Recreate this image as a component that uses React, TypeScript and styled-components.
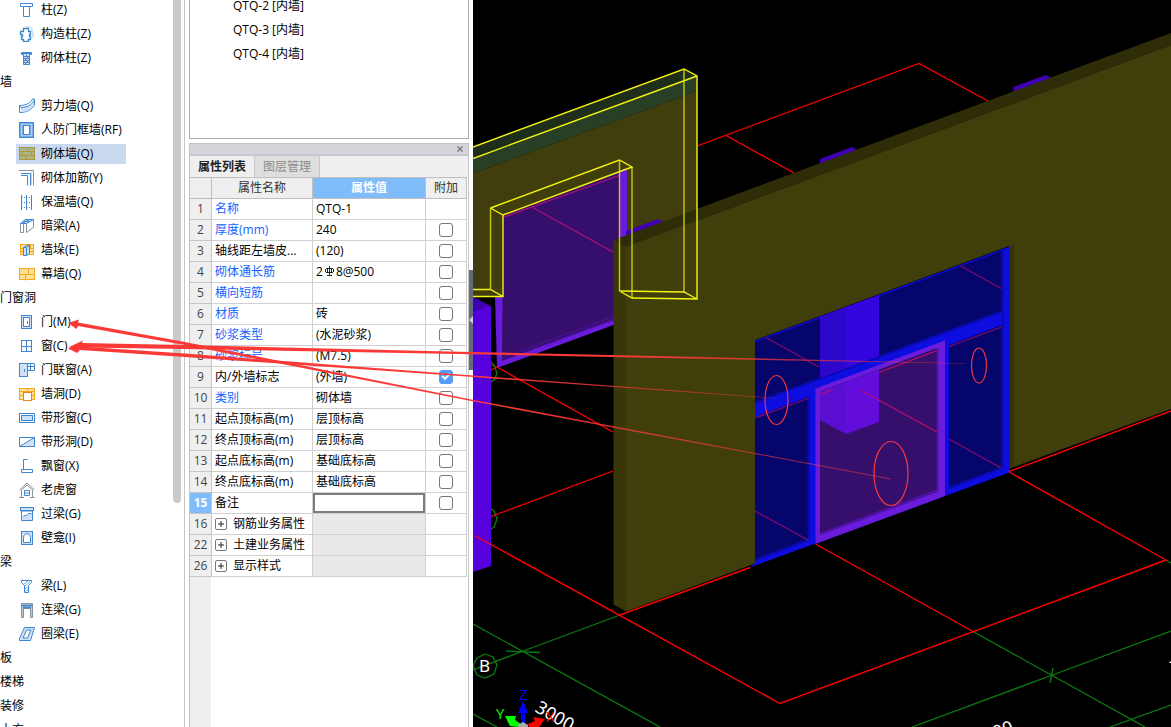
import React from "react";
import styled, { createGlobalStyle } from "styled-components";

const GlobalStyle = createGlobalStyle`
  *, *::before, *::after { box-sizing: border-box; }
  body {
    margin: 0;
    background: #fff;
    overflow: hidden;
    font: 12px/20px "Open Sans", "Noto Sans CJK SC", sans-serif;
    color: #000;
  }
  button, input, table { font: inherit; color: inherit; }
  ul { list-style: none; margin: 0; padding: 0; }
`;

const Shell = styled.div`
  position: relative;
  display: flex;
  height: 100vh;
  overflow: hidden;
`;

const Sidebar = styled.nav`
  flex: 0 0 185px;
  display: flex;
  justify-content: space-between;
  padding-right: 3px;
  border-right: 1px solid #c4c6c8;
  overflow: hidden;
`;

const Tree = styled.ul`
  margin-top: -2px;
`;

const TreeGroup = styled.li`
  height: 24px;
  line-height: 24px;
  white-space: nowrap;
`;

const TreeRow = styled.li`
  height: 24px;
  display: flex;
  align-items: center;
  padding-left: 16px;
`;

const TreeButton = styled.button<{ $selected: boolean }>`
  display: flex;
  align-items: center;
  gap: 6px;
  width: 110px;
  height: 20px;
  padding: 0 3px;
  border: 0;
  background: ${(p) => (p.$selected ? "#c9d9f0" : "transparent")};
  white-space: nowrap;
  svg { flex: none; }
`;

const ScrollThumb = styled.div`
  width: 8px;
  height: 503px;
  border-radius: 0 0 4px 4px;
  background: #cacaca;
`;

const Middle = styled.div`
  position: relative;
  flex: 0 0 288px;
  display: flex;
  flex-direction: column;
  gap: 4px;
  padding: 0 4px;
`;

const ComponentList = styled.ul`
  flex: 0 0 139px;
  overflow: hidden;
  border: 1px solid #acacac;
  border-top: 0;
  li {
    height: 24px;
    padding-left: 43px;
    line-height: 24px;
  }
  li:first-child { margin-top: -6px; }
`;

const Dock = styled.section`
  flex: 1;
  display: flex;
  flex-direction: column;
  min-height: 0;
  border: 1px solid #c2c4c8;
  border-bottom: 0;
`;

const DockTitle = styled.header`
  display: flex;
  justify-content: flex-end;
  align-items: center;
  height: 12px;
  padding-right: 4px;
  background: #d3d5da;
  border-bottom: 2px solid #c5c8cc;
`;

const CloseButton = styled.button`
  display: flex;
  padding: 0;
  border: 0;
  background: none;
`;

const Tabs = styled.div`
  display: flex;
  height: 21px;
  background: #efefef;
`;

const Tab = styled.button<{ $active: boolean }>`
  width: 65px;
  padding: 0;
  border: 0;
  border-right: 1px solid #c5c8cc;
  background: ${(p) => (p.$active ? "#efefef" : "#dedede")};
  color: ${(p) => (p.$active ? "#222" : "#8c8c8c")};
  font-weight: ${(p) => (p.$active ? 700 : 400)};
`;

const GridArea = styled.div`
  flex: 1;
  padding-right: 1px;
  background: linear-gradient(to right, #efefef 21px, #fff 21px);
`;

const Grid = styled.table`
  width: 100%;
  table-layout: fixed;
  border-collapse: separate;
  border-spacing: 0;
  tr { height: 21px; }
`;

const HeadCell = styled.th<{ $active?: boolean }>`
  height: 22px;
  padding: 0;
  border: solid #bfbfbf;
  border-width: 1px 1px 1px 0;
  background: ${(p) => (p.$active ? "#80bbfa" : "#efefef")};
  color: ${(p) => (p.$active ? "#fff" : "#333")};
  font-weight: ${(p) => (p.$active ? 700 : 400)};
`;

const RowHead = styled.th<{ $active?: boolean }>`
  padding: 0;
  border: solid #c6c6c6;
  border-width: 0 1px 1px 0;
  background: ${(p) => (p.$active ? "#80bbfa" : "#efefef")};
  color: ${(p) => (p.$active ? "#fff" : "#444")};
  font-weight: ${(p) => (p.$active ? 700 : 400)};
`;

const Cell = styled.td<{ $link?: boolean; $muted?: boolean; $center?: boolean }>`
  height: 21px;
  padding: 0 0 0 ${(p) => (p.$center ? 0 : 3)}px;
  border: solid #d0d0d0;
  border-width: 0 1px 1px 0;
  background: ${(p) => (p.$muted ? "#e9e9e9" : "#fff")};
  color: ${(p) => (p.$link ? "#1463ff" : "#000")};
  text-align: ${(p) => (p.$center ? "center" : "left")};
  white-space: nowrap;
  overflow: hidden;
`;

const EditCell = styled(Cell)`
  padding: 0;
`;

const NoteInput = styled.input`
  display: block;
  width: 100%;
  height: 20px;
  padding: 0 2px;
  border: 2px solid #7c7c7c;
  border-radius: 0;
  background: #fff;
  outline: 0;
`;

const Tick = styled.input`
  appearance: none;
  position: relative;
  display: block;
  width: 14px;
  height: 14px;
  margin: 0 auto;
  border: 1px solid #777;
  border-radius: 3px;
  background: #fff;
  &:checked { background: #549ef7; border-color: #549ef7; }
  &:checked::after {
    content: "";
    position: absolute;
    left: 2px;
    top: 2px;
    width: 8px;
    height: 5px;
    border: solid #fff;
    border-width: 0 0 2px 2px;
    transform: rotate(-45deg);
  }
`;

const ExpandLine = styled.div`
  display: flex;
  align-items: center;
  gap: 6px;
`;

const Expand = styled.button`
  display: flex;
  align-items: center;
  justify-content: center;
  width: 12px;
  height: 12px;
  padding: 0;
  border: 1px solid #777;
  border-radius: 2px;
  background: #fff;
`;

const SplitHandle = styled.button`
  position: absolute;
  right: 0;
  top: 270px;
  display: flex;
  align-items: center;
  width: 4px;
  height: 100px;
  padding: 0;
  border: 0;
  background: #626c79;
`;

const Viewport = styled.main`
  flex: 1;
  min-width: 0;
  background: #000;
  svg { display: block; width: 100%; height: 100%; }
`;

const Markup = styled.svg`
  position: absolute;
  inset: 0;
  width: 100%;
  height: 100%;
  pointer-events: none;
`;

const BarMark = styled.svg`
  margin: 0 2px;
`;

const B = "#3f86d0";
const L = "#cfe1f7";
const O = "#f5a81c";
const Y = "#ffe09a";
const G = "#86929c";

const icons: Record<string, React.ReactNode> = {
  column: <path d="M1.500 1.500h12v3h-3v10h-6v-10h-3z M4.500 4.500h6" fill="#fff" stroke={B} />,
  structColumn: (
    <>
      <path d="M7 .8h4l2 2v3l1 1v4l-1 1" fill="none" stroke="#a9c9ec" />
      <path d="M4.500 2.500h5v3h2v3h-1v2h1v3h-2v2h-5v-2h-2v-3h1v-2h-2v-3h3z" fill="#fff" stroke={B} strokeWidth="1.300" />
    </>
  ),
  brickColumn: (
    <>
      <path d="M2.500 2.500h10v2h-2v10h-6v-10h-2z" fill={L} stroke={B} />
      <path d="M5 6.500h5M5 8.500h5M5 10.500h5M5 12.500h5M2 3.500h11M7.500 4.500v2M8.500 6.500v2M6.500 8.500v2M8.500 10.500v2M6.500 12.500v2" stroke={B} />
    </>
  ),
  shear: (
    <>
      <path d="M.5 7.500c6 0 11-2 13-6.500h2v6c-3 5-8 7.500-15 7.500z" fill="#fff" stroke={B} />
      <path d="M2 9.500c6 0 10-2 13-7v4.500c-3 4-7 7-13 7z" fill={L} />
      <path d="M.5 7.500l1.500 2c6 0 10-2 13-7" fill="none" stroke={B} />
    </>
  ),
  airDefense: (
    <>
      <rect x=".5" y=".5" width="14" height="15" fill="#78aeea" stroke={B} />
      <rect x="2.500" y="2.500" width="10" height="11" fill="none" stroke="#a9cdf3" />
      <rect x="4.500" y="3.500" width="6" height="9" fill="#fff" stroke={B} />
    </>
  ),
  brickWall: (
    <>
      <rect x=".5" y="1.500" width="15" height="12" fill="#a9b491" stroke="#ad9a33" />
      <path d="M0 5.500h16M0 9.500h16M8.500 1.500v4M3.500 5.500v4M12.500 5.500v4M7.500 9.500v4" stroke="#ad9a33" />
    </>
  ),
  rebar: (
    <>
      <path d="M0 .5h14.500v15" fill="none" stroke={G} />
      <path d="M2 3.500h9.500v12M2 5.500h6.500v10" fill="none" stroke={B} />
      <path d="M12.500 2v13" stroke="#c3d8f0" />
    </>
  ),
  insulation: (
    <>
      <path d="M2.500 1v15M7.500 1v15M12.500 1v15" stroke={B} />
      <path d="M2.500 3.500h10M2.500 8.500h10M2.500 13.500h10" stroke={B} strokeDasharray="1 1.500" />
    </>
  ),
  hiddenBeam: (
    <>
      <path d="M1.500 5.500l5-4h8v8l-7 5v-9z" fill="#fff" stroke={G} />
      <path d="M1.500 5.500h3v9h-3zM4.500 5.500h3" fill="#fff" stroke={G} />
      <path d="M1.500 5.500l5-4h8l-7 4z" fill={L} stroke={B} />
      <path d="M4 5l6-3.500M5 3.500h6" fill="none" stroke={B} />
    </>
  ),
  pier: (
    <>
      <rect x="1.500" y="2.500" width="13" height="10" fill={Y} stroke={O} />
      <path d="M1 6.500h14M1 9.500h14M11.500 2.500v4" stroke={O} />
      <path d="M4.500 5.500l3-2h3v8l-3 2h-3z" fill={L} stroke={B} />
      <path d="M4.500 5.500h3v8M7.500 5.500l3-2" fill="none" stroke={B} />
    </>
  ),
  curtain: (
    <>
      <rect x=".5" y="2.500" width="15" height="11" fill={Y} stroke={O} />
      <path d="M0 8.500h16M9.500 2.500v6M6.500 8.500v6" stroke={O} />
    </>
  ),
  door: (
    <>
      <rect x="2.500" y="1.500" width="10" height="13" fill={L} stroke={B} />
      <rect x="4.500" y="3.500" width="6" height="9" fill="#fff" stroke={B} />
      <path d="M8.500 7v3" stroke={B} />
    </>
  ),
  window: (
    <>
      <rect x="2.500" y="2.500" width="10" height="11" fill="#fff" stroke={B} />
      <path d="M7.500 2.500v11M2.500 8.500h10" stroke={B} />
      <path d="M5.500 7.500v2M9.500 7.500v2" stroke="#7fb0e6" />
    </>
  ),
  doorWindow: (
    <>
      <path d="M7.500 1.500h8v7h-8zM11.500 1.500v7M7.500 4.500h8" fill="#fff" stroke={B} />
      <rect x=".5" y="1.500" width="8" height="13" fill={L} stroke={B} />
      <path d="M5.500 7v3" stroke={B} />
    </>
  ),
  wallHole: (
    <>
      <rect x=".5" y="2.500" width="15" height="11" fill={Y} stroke={O} />
      <path d="M0 5.500h16M0 9.500h4M12 9.500h4M8.500 2.500v3" stroke={O} />
      <rect x="4.500" y="6.500" width="8" height="8" fill="#fff" stroke="#e98420" />
    </>
  ),
  stripWindow: (
    <>
      <rect x=".5" y="3.500" width="15" height="9" fill="#fff" stroke={B} />
      <rect x="2.500" y="5.500" width="11" height="5" fill={L} stroke={B} />
    </>
  ),
  stripHole: (
    <>
      <rect x=".5" y="3.500" width="15" height="9" fill="#fff" stroke={B} />
      <path d="M.5 12.500l15-9v9z" fill={L} stroke={B} />
    </>
  ),
  bay: <path d="M8.500 1.500h-4v10M2.500 11.500h11v3h-11z" fill="none" stroke={B} />,
  dormer: (
    <>
      <path d="M.5 8l7.500-7 7.500 7M2.500 7.500v7.500M13.500 7.500v7.500M0 15.500h5M11 15.500h5M2.500 8l5.500-5 5.500 5" fill="none" stroke={G} />
      <path d="M5.500 8.500h5v5h-5zM5.500 11h5" fill="#fff" stroke={B} />
    </>
  ),
  lintel: (
    <>
      <path d="M2.500 5h11v9.500h-11z" fill="#fff" stroke={B} />
      <path d="M3 14v-4l4-1 3-2h3v7z" fill={L} />
      <path d="M4.500 10l3-.5 2-2h3" fill="none" stroke={B} />
      <rect x="1.500" y="1.500" width="13" height="3" fill={L} stroke={B} />
    </>
  ),
  niche: (
    <>
      <rect x="2.500" y="1.500" width="11" height="13" fill={L} stroke={B} />
      <path d="M4.500 12.500v-5c0-5 7-5 7 0v5z" fill="#fff" stroke={B} />
    </>
  ),
  beam: (
    <>
      <path d="M2.500 2.500h10v2l-3 3v7h-4v-7l-3-3z" fill="#fff" stroke={B} />
      <path d="M5 6l4-3M6 8l5-4M6 11l3-2M6 13.500l3-2" stroke={B} strokeWidth=".7" />
    </>
  ),
  linkBeam: (
    <>
      <path d="M2.500 1.500h11v14h-2v-9h-7v9h-2z" fill="#bdc7cd" stroke={G} />
      <path d="M3 3.500h10M4 5.500h8" stroke={B} strokeWidth="1.500" />
    </>
  ),
  ringBeam: (
    <>
      <path d="M5.500 1.500h10l-4 13h-11v-2z" fill={L} stroke={B} />
      <path d="M7.500 4h4.500l-3.500 8h-4.500z" fill="#fff" stroke={B} />
    </>
  ),
};

type TreeEntry = { group: string } | { label: string; icon: string; selected?: boolean };

const tree: TreeEntry[] = [
  { label: "柱(Z)", icon: "column" },
  { label: "构造柱(Z)", icon: "structColumn" },
  { label: "砌体柱(Z)", icon: "brickColumn" },
  { group: "墙" },
  { label: "剪力墙(Q)", icon: "shear" },
  { label: "人防门框墙(RF)", icon: "airDefense" },
  { label: "砌体墙(Q)", icon: "brickWall", selected: true },
  { label: "砌体加筋(Y)", icon: "rebar" },
  { label: "保温墙(Q)", icon: "insulation" },
  { label: "暗梁(A)", icon: "hiddenBeam" },
  { label: "墙垛(E)", icon: "pier" },
  { label: "幕墙(Q)", icon: "curtain" },
  { group: "门窗洞" },
  { label: "门(M)", icon: "door" },
  { label: "窗(C)", icon: "window" },
  { label: "门联窗(A)", icon: "doorWindow" },
  { label: "墙洞(D)", icon: "wallHole" },
  { label: "带形窗(C)", icon: "stripWindow" },
  { label: "带形洞(D)", icon: "stripHole" },
  { label: "飘窗(X)", icon: "bay" },
  { label: "老虎窗", icon: "dormer" },
  { label: "过梁(G)", icon: "lintel" },
  { label: "壁龛(I)", icon: "niche" },
  { group: "梁" },
  { label: "梁(L)", icon: "beam" },
  { label: "连梁(G)", icon: "linkBeam" },
  { label: "圈梁(E)", icon: "ringBeam" },
  { group: "板" },
  { group: "楼梯" },
  { group: "装修" },
  { group: "土方" },
];

const RebarMark = () => (
  <BarMark width="9" height="10" viewBox="0 0 9 10" role="img" aria-label="HRB400">
    <path d="M4.500 0v9M2.500 2v5M6.500 2v5M1 2.500h7M1 6.500h7M.5 3v3M8.500 3v3M2 9.500h5" fill="none" stroke="#111" strokeWidth=".9" />
  </BarMark>
);

type Property = { no: number; name: string; link?: boolean; value?: React.ReactNode; tick?: boolean };

const properties: Property[] = [
  { no: 1, name: "名称", link: true, value: "QTQ-1" },
  { no: 2, name: "厚度(mm)", link: true, value: "240", tick: false },
  { no: 3, name: "轴线距左墙皮...", value: "(120)", tick: false },
  { no: 4, name: "砌体通长筋", link: true, value: <>2<RebarMark />8@500</>, tick: false },
  { no: 5, name: "横向短筋", link: true, tick: false },
  { no: 6, name: "材质", link: true, value: "砖", tick: false },
  { no: 7, name: "砂浆类型", link: true, value: "(水泥砂浆)", tick: false },
  { no: 8, name: "砂浆标号", link: true, value: "(M7.5)", tick: false },
  { no: 9, name: "内/外墙标志", value: "(外墙)", tick: true },
  { no: 10, name: "类别", link: true, value: "砌体墙", tick: false },
  { no: 11, name: "起点顶标高(m)", value: "层顶标高", tick: false },
  { no: 12, name: "终点顶标高(m)", value: "层顶标高", tick: false },
  { no: 13, name: "起点底标高(m)", value: "基础底标高", tick: false },
  { no: 14, name: "终点底标高(m)", value: "基础底标高", tick: false },
];

const sections = [
  { no: 16, name: "钢筋业务属性" },
  { no: 22, name: "土建业务属性" },
  { no: 26, name: "显示样式" },
];

function PropertyTable() {
  return (
    <Grid>
      <colgroup>
        <col style={{ width: 22 }} />
        <col style={{ width: 101 }} />
        <col style={{ width: 113 }} />
        <col />
      </colgroup>
      <thead>
        <tr>
          <HeadCell />
          <HeadCell scope="col">属性名称</HeadCell>
          <HeadCell scope="col" $active>属性值</HeadCell>
          <HeadCell scope="col">附加</HeadCell>
        </tr>
      </thead>
      <tbody>
        {properties.map((p) => (
          <tr key={p.no}>
            <RowHead scope="row">{p.no}</RowHead>
            <Cell $link={p.link}>{p.name}</Cell>
            <Cell>{p.value}</Cell>
            <Cell $center>
              {p.tick !== undefined && <Tick type="checkbox" defaultChecked={p.tick} aria-label={p.name} />}
            </Cell>
          </tr>
        ))}
        <tr>
          <RowHead scope="row" $active>15</RowHead>
          <Cell><label htmlFor="note">备注</label></Cell>
          <EditCell><NoteInput id="note" type="text" /></EditCell>
          <Cell $center><Tick type="checkbox" aria-label="备注" /></Cell>
        </tr>
        {sections.map((s) => (
          <tr key={s.no}>
            <RowHead scope="row">{s.no}</RowHead>
            <Cell>
              <ExpandLine>
                <Expand aria-label={s.name}>
                  <svg width="8" height="8" viewBox="0 0 8 8"><path d="M1 4h6M4 1v6" stroke="#222" /></svg>
                </Expand>
                {s.name}
              </ExpandLine>
            </Cell>
            <Cell $muted />
            <Cell />
          </tr>
        ))}
      </tbody>
    </Grid>
  );
}

function Scene() {
  return (
    <svg viewBox="473 0 698 727" preserveAspectRatio="xMinYMin slice" fontFamily='"Noto Sans", sans-serif'>
      {/* axis grid beyond the walls */}
      <g fill="none" stroke="#f00" strokeWidth="1.300">
        <path d="M697 146L919 63.500L988 101M726 135.500L794 173" />
        <path d="M491 365l6 2L613 432M491 370l6-3M491 516.500L613 471" />
      </g>
      <g fill="none" stroke="#0b7d10" strokeWidth="1.300">
        <path d="M491 362l3 3 3 8-2 6-4 3M491 509l3 2 3 8-3 8-3 2" />
        <path d="M473 624L660 727M473 714L497 727M473 670L522 651.500L620 615M506 651L540 652.500" />
        <path d="M485 654l8 3 4 8-3 9-9 4-8-3-4-9 4-8z" />
        <path d="M973 631.500L1145 727M912 727L1051 675.500L1171 631M1110 727L1171 705M1053 668L1050 683M1166 560l5 3" />
      </g>

      {/* left column */}
      <path d="M473 297L491 306V308L473 313z" fill="#4000b4" />
      <path d="M473 312L491 306V566L473 572z" fill="#5600de" />

      {/* selected wall with door opening */}
      <path d="M473 147L684 69L697 76L473 158.500z" fill="#1e2e1b" />
      <path d="M473 158.500L697 76V91L473 173.500z" fill="#283f25" />
      <path d="M473 173.500L697 91V299H632V167L503 215V297H473z" fill="#403e0c" />
      <path d="M503 215L627 169V320L497 368L495 297H503z" fill="#6a1bdb" />
      <path d="M503 215L620 172V318L502 361z" fill="#360f6d" />
      <path d="M502 358L620 314" stroke="#4c13a0" />
      <path d="M502 361L620 317" stroke="#5415b4" />
      <path d="M627 168H632V300H627z" fill="#403e0c" />
      <path d="M503 217.500L619 175.500M532 207L613 252" stroke="#b01075" strokeWidth="1.200" fill="none" />

      {/* column heads above the long wall */}
      <path d="M626 231L658 219L663 222L626 237zM820 159L852 147L857 150L820 165zM1013.500 87L1046 75L1051 78L1013.500 93z" fill="#4000b4" />

      {/* long wall */}
      <path d="M613.500 240L1171 33V45L626 247z" fill="#2f2d08" />
      <path d="M613.500 240L626 247V611.500L613.500 604.500z" fill="#39360a" />
      <path d="M626 247L1171 45V409L1014 467L1009 465V246L755 340V563.500L626 611.500z" fill="#403f0c" />
      <path d="M1009 246.500L1014 244.500V467L1009 469z" fill="#363408" />

      {/* selection outline, drawn over both walls */}
      <g fill="none" strokeWidth="1.400">
        <path d="M684 69V292M619.500 160V291M632 167V298M490.500 208V289.500" stroke="#c9c90a" />
        <path
          d="M473 147L684 69L697 76V299L632 298L619.500 291L684 292L697 299M473 158.500L697 76M490.500 208L619.500 160L632 167L503 215L490.500 208M503 215V296.500H473M473 289.500H490.500L503 296.500"
          stroke="#f4f410"
        />
      </g>

      {/* window assembly */}
      <path d="M755 340.500L1009.500 246.500V472.500L750 567.500L755 563z" fill="#0d0de0" />
      <path d="M755 342L1001.500 251V311L755 402zM755 417L808 397V539L755 559zM949 345L1001.500 325V467L949 487z" fill="#06056b" />
      <path d="M755 402.500L1001.500 311.500M755 560L808 540M949 488L1001.500 468M1002.500 250V468M808.500 397V539" stroke="#090aa8" strokeWidth="2" fill="none" />
      <path d="M820 316.500L846 307V368.500L820 378z" fill="#2d07cc" />
      <path d="M846 307L879 295V356L846 368.500z" fill="#3306dd" />

      {/* door */}
      <path d="M815.500 388.500L945 340.500V496L815.500 544z" fill="#6a1bdb" />
      <path d="M820 391.500L937 348V492L820 535z" fill="#360f6d" />
      <path d="M820 534L937 490.500M937.500 348V492" stroke="#5012ab" strokeWidth="2" />
      <path d="M820 391.500L846 382V434L820 420z" fill="#5a0fd0" />
      <path d="M846 382L879 370V422L846 434z" fill="#620dda" />

      <g stroke="#830a70" strokeWidth="1.300">
        <path d="M766 337.500L819 367M960 265.500L1001 288.500M755 418L808 398.500M949 346.500L1001.500 327M949 439L1001 468M755 511L808 540" />
      </g>
      <g stroke="#b81070" strokeWidth="1.300">
        <path d="M820 394.500L833 389.500M879 372.500L937 350.500M862 391L937 432" />
      </g>

      {/* axis grid in front */}
      <g fill="none" stroke="#f00" strokeWidth="1.400">
        <path d="M474.500 535.500L780 703.500L1166 560L1009 472M620 615L750 567.500M1009 471.500L1171 411M815.500 544L973 631.500" />
      </g>

      <g fill="#fff">
        <text x="479" y="672" fontSize="17">B</text>
        <text transform="translate(534 711) rotate(30)" fontSize="18">3000</text>
        <text transform="translate(976 746) rotate(-20)" fontSize="18">3000</text>
        <path d="M1169 663l2-2v2z" />
      </g>

      {/* coordinate gizmo */}
      <path d="M521 713H525V727H521zM518 713L523 701L528 713z" fill="#00f" />
      <path d="M505 716L516 716L515 720L521 724L517 727L510 726z" fill="#0f0" />
      <path d="M545 719L539 727H529L528 724L535 721L533 717z" fill="#f00" />
      <path d="M518 725L523 722L528 725V727H518z" fill="#aaa" />
      <g fontFamily='"Open Sans", sans-serif' fontSize="15">
        <text x="519" y="700" fill="#00f">Z</text>
        <text x="496" y="719" fill="#0f0">Y</text>
        <text x="546" y="722" fill="#f00">X</text>
      </g>
    </svg>
  );
}

function Annotations() {
  return (
    <Markup viewBox="0 0 1171 727" preserveAspectRatio="xMinYMin slice" aria-hidden="true">
      <defs>
        <linearGradient id="fadeA" gradientUnits="userSpaceOnUse" x1="68" y1="0" x2="891" y2="0">
          <stop offset=".5" stopColor="#fb3a38" />
          <stop offset="1" stopColor="#fb3a38" stopOpacity=".5" />
        </linearGradient>
        <linearGradient id="fadeB" gradientUnits="userSpaceOnUse" x1="68" y1="0" x2="965" y2="0">
          <stop offset=".6" stopColor="#fb3a38" />
          <stop offset="1" stopColor="#fb3a38" stopOpacity=".4" />
        </linearGradient>
        <linearGradient id="fadeC" gradientUnits="userSpaceOnUse" x1="68" y1="0" x2="776" y2="0">
          <stop offset=".6" stopColor="#fb3a38" />
          <stop offset="1" stopColor="#fb3a38" stopOpacity=".4" />
        </linearGradient>
      </defs>
      <path d="M68 323L79 319.500L78 322.500L185 342L470 399.200L891 478.600V479.400L470 400.800L185 345L78 326L76.500 329z" fill="url(#fadeA)" />
      <path d="M69 347L83 340.500L82 343L185 345L470 352L700 357L965 363.200V363.800L700 358.800L470 354.200L185 349L82 347.500L78 350z" fill="url(#fadeB)" />
      <path d="M68 348.500L80 343L80 346.500L185 353.500L470 375.200L776 398V398.600L470 376.800L185 357L80 350L77 353z" fill="url(#fadeC)" />
      <g fill="none" stroke="#f23a3e" strokeWidth="1.200">
        <ellipse cx="776.500" cy="400" rx="11.500" ry="24.500" />
        <ellipse cx="891" cy="473.500" rx="17" ry="32" />
        <ellipse cx="979" cy="365.500" rx="7.500" ry="17.500" />
      </g>
    </Markup>
  );
}

export default function App() {
  return (
    <Shell>
      <GlobalStyle />
      <Sidebar>
        <Tree>
          {tree.map((e, i) =>
            "group" in e ? (
              <TreeGroup key={i}>{e.group}</TreeGroup>
            ) : (
              <TreeRow key={i}>
                <TreeButton $selected={!!e.selected}>
                  <svg width="16" height="16" viewBox="0 0 16 16" fill="none">{icons[e.icon]}</svg>
                  {e.label}
                </TreeButton>
              </TreeRow>
            )
          )}
        </Tree>
        <ScrollThumb />
      </Sidebar>
      <Middle>
        <ComponentList>
          <li>QTQ-2 [内墙]</li>
          <li>QTQ-3 [内墙]</li>
          <li>QTQ-4 [内墙]</li>
        </ComponentList>
        <Dock>
          <DockTitle>
            <CloseButton aria-label="关闭">
              <svg width="8" height="6" viewBox="0 0 8 6"><path d="M1.500 .5l5 5M6.500 .5l-5 5" stroke="#777" strokeWidth="1.300" /></svg>
            </CloseButton>
          </DockTitle>
          <Tabs role="tablist">
            <Tab role="tab" aria-selected="true" $active>属性列表</Tab>
            <Tab role="tab" aria-selected="false" $active={false}>图层管理</Tab>
          </Tabs>
          <GridArea>
            <PropertyTable />
          </GridArea>
        </Dock>
        <SplitHandle aria-label="折叠面板">
          <svg width="4" height="8" viewBox="0 0 4 8"><path d="M4 0v8L0 4z" fill="#c8ccd2" /></svg>
        </SplitHandle>
      </Middle>
      <Viewport>
        <Scene />
      </Viewport>
      <Annotations />
    </Shell>
  );
}
